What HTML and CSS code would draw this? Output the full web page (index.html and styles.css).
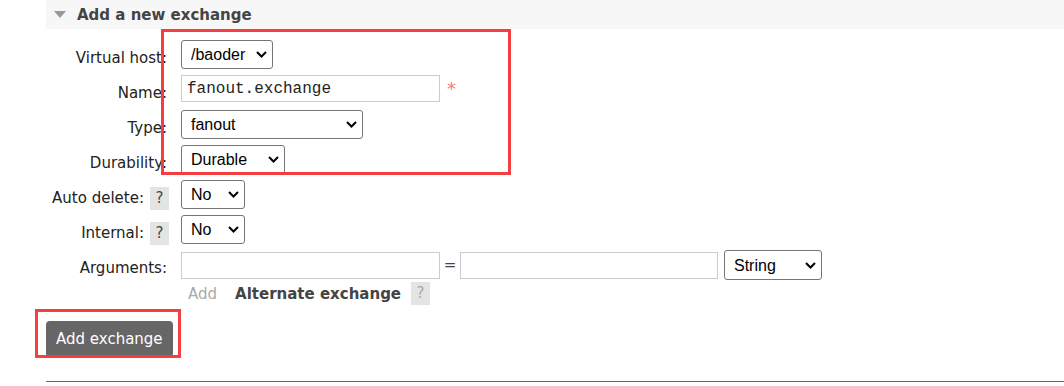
FILE: index.html
```html
<!DOCTYPE html>
<html lang="en">
<head>
  <meta charset="UTF-8" />
  <title>Add a new exchange</title>
  <link rel="stylesheet" href="styles.css">
</head>
<body>
  <div class="section">
    <h2 class="section-title"><span class="arrow"></span>Add a new exchange</h2>
    <div class="section-body">
      <form class="exchange-form">
        <table class="form">
          <tr>
            <th><label>Virtual host:</label></th>
            <td>
              <select class="sel-vhost">
                <option>/baoder</option>
              </select>
            </td>
          </tr>
          <tr>
            <th><label>Name:</label></th>
            <td><input type="text" class="field" value="fanout.exchange" /><span class="mand">*</span></td>
          </tr>
          <tr>
            <th><label>Type:</label></th>
            <td>
              <select class="sel-type">
                <option>fanout</option>
              </select>
            </td>
          </tr>
          <tr>
            <th><label>Durability:</label></th>
            <td>
              <select class="sel-durable">
                <option>Durable</option>
              </select>
            </td>
          </tr>
          <tr>
            <th><label>Auto delete:</label><span class="help">?</span></th>
            <td>
              <select class="sel-no">
                <option>No</option>
              </select>
            </td>
          </tr>
          <tr>
            <th><label>Internal:</label><span class="help">?</span></th>
            <td>
              <select class="sel-no">
                <option>No</option>
              </select>
            </td>
          </tr>
          <tr>
            <th><label>Arguments:</label></th>
            <td>
              <div class="args">
                <input type="text" class="field arg" />
                <span class="eq">=</span>
                <input type="text" class="field arg" />
                <select class="sel-string">
                  <option>String</option>
                </select>
              </div>
              <div class="arg-links">
                <span class="add">Add</span>
                <span class="alt">Alternate exchange</span>
                <span class="help">?</span>
              </div>
            </td>
          </tr>
        </table>
        <div class="submit-row">
          <button type="button" class="btn">Add exchange</button>
          <div class="mark mark-btn"></div>
        </div>
        <div class="mark mark-fields"></div>
      </form>
    </div>
  </div>
</body>
</html>
```

FILE: styles.css
```css
body {
  margin: 0;
  padding: 0 0 0 46px;
  font-family: "DejaVu Sans", Verdana, sans-serif;
  font-size: 15px;
  color: #484848;
  background: white;
}
.section {
  border-bottom: 1px solid #666;
  padding-bottom: 24px;
}
.section-title {
  margin: 0;
  height: 29px;
  background: #f7f7f7;
  display: flex;
  align-items: center;
  font-size: 15px;
  font-weight: bold;
  color: #444;
}
.arrow {
  width: 0;
  height: 0;
  margin: 0 11px 0 8px;
  border-left: 6px solid transparent;
  border-right: 6px solid transparent;
  border-top: 7px solid #999;
}
.section-body {
  position: relative;
}
.exchange-form {
  padding-top: 11px;
}
table.form {
  border-collapse: collapse;
}
table.form th {
  width: 121px;
  padding: 0 14px 0 0;
  text-align: right;
  font-weight: normal;
  color: #222;
  white-space: nowrap;
  vertical-align: top;
  height: 35px;
}
table.form th label {
  display: inline-block;
  line-height: 29px;
  padding-top: 4px;
}
table.form td {
  padding: 0 0 6px 0;
  vertical-align: top;
}
select {
  appearance: none;
  -webkit-appearance: none;
  font-family: "Liberation Sans", Arial, sans-serif;
  font-size: 16px;
  color: #000;
  height: 29px;
  border: 1px solid #767676;
  border-radius: 3px;
  padding: 0 22px 0 9px;
  background: white url("data:image/svg+xml,%3Csvg xmlns='http://www.w3.org/2000/svg' width='11' height='7' viewBox='0 0 11 7'%3E%3Cpath d='M1 1l4.5 4.5L10 1' fill='none' stroke='%23000' stroke-width='2'/%3E%3C/svg%3E") no-repeat right 5px center;
}
.sel-vhost { width: 92px; }
.sel-type { width: 182px; }
.sel-durable { width: 104px; }
.sel-no { width: 64px; }
.sel-string { width: 98px; height: 30px; }
.field {
  width: 259px;
  height: 27px;
  box-sizing: border-box;
  border: 1px solid #ccc;
  font-family: "Liberation Mono", "Courier New", monospace;
  font-size: 16px;
  color: #222;
  padding: 0 5px;
}
.field.arg {
  font-family: "Liberation Sans", Arial, sans-serif;
}
.mand {
  color: #f77;
  margin-left: 7px;
  font-size: 18px;
  vertical-align: middle;
}
.help {
  display: inline-block;
  width: 19px;
  height: 23px;
  line-height: 23px;
  text-align: center;
  background: #e4e4e4;
  color: #444;
  margin: 7px -2px 0 6px;
  vertical-align: top;
}
.args {
  display: flex;
  align-items: center;
}
.eq {
  color: #444;
  width: 20px;
  text-align: center;
}
.args .field.arg:last-of-type {
  width: 258px;
  margin-right: 6px;
}
.arg-links {
  display: flex;
  align-items: center;
  margin-top: 2px;
  padding-left: 7px;
}
.add {
  color: #aaa;
  margin-right: 18px;
}
.alt {
  font-weight: bold;
  color: #444;
}
.arg-links .help {
  margin: 0 0 0 10px;
  color: #aaa;
}
.submit-row {
  position: relative;
  margin-top: 10px;
}
.btn {
  background: #666;
  color: white;
  border: none;
  border-radius: 4px;
  height: 36px;
  padding: 0 10px;
  font-family: "DejaVu Sans", Verdana, sans-serif;
  font-size: 15px;
}
/* red annotation boxes drawn over the screenshot */
.mark {
  position: absolute;
  border: 3px solid #f33f3f;
  pointer-events: none;
}
.mark-fields {
  left: 115px;
  top: 0;
  width: 344px;
  height: 140px;
}
.mark-btn {
  left: -11px;
  top: -12px;
  width: 140px;
  height: 43px;
}
```
